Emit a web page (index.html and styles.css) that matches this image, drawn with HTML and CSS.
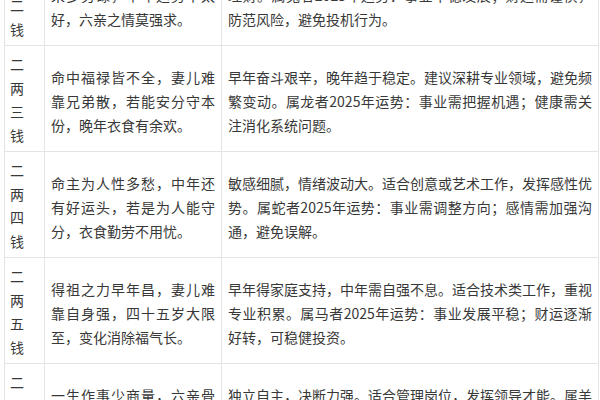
FILE: index.html
```html
<!DOCTYPE html>
<html lang="zh-CN">
<head>
<meta charset="utf-8">
<title>称骨算命</title>
<link rel="stylesheet" href="styles.css">
</head>
<body>
<div class="wrap">
<table class="bone">
  <colgroup>
    <col class="c-weight">
    <col class="c-verse">
    <col class="c-note">
  </colgroup>
  <tbody>
    <tr>
      <td class="weight">二两二钱</td>
      <td class="verse">身寒骨冷苦伶仃，此命推来多劳碌，早年运势不太好，六亲之情莫强求。</td>
      <td class="note">早年运势多坎坷，需靠自身努力奋斗。适合稳定工作，注意理财。属兔者2025年运势：事业平稳发展；财运需谨慎，防范风险，避免投机行为。</td>
    </tr>
    <tr>
      <td class="weight">二两三钱</td>
      <td class="verse">命中福禄皆不全，妻儿难靠兄弟散，若能安分守本份，晚年衣食有余欢。</td>
      <td class="note">早年奋斗艰辛，晚年趋于稳定。建议深耕专业领域，避免频繁变动。属龙者2025年运势：事业需把握机遇；健康需关注消化系统问题。</td>
    </tr>
    <tr>
      <td class="weight">二两四钱</td>
      <td class="verse">命主为人性多愁，中年还有好运头，若是为人能守分，衣食勤劳不用忧。</td>
      <td class="note">敏感细腻，情绪波动大。适合创意或艺术工作，发挥感性优势。属蛇者2025年运势：事业需调整方向；感情需加强沟通，避免误解。</td>
    </tr>
    <tr>
      <td class="weight">二两五钱</td>
      <td class="verse">得祖之力早年昌，妻儿难靠自身强，四十五岁大限至，变化消除福气长。</td>
      <td class="note">早年得家庭支持，中年需自强不息。适合技术类工作，重视专业积累。属马者2025年运势：事业发展平稳；财运逐渐好转，可稳健投资。</td>
    </tr>
    <tr>
      <td class="weight">二两六钱</td>
      <td class="verse">一生作事少商量，六亲骨肉不相帮，中年以后渐亨通，晚景安康福寿长。</td>
      <td class="note">独立自主，决断力强。适合管理岗位，发挥领导才能。属羊者2025年运势：事业稳中有进，贵人运较旺；人际关系需多加维护，注意劳逸结合。</td>
    </tr>
  </tbody>
</table>
</div>
</body>
</html>
```

FILE: styles.css
```css
html, body {
  margin: 0;
  padding: 0;
  background: #ffffff;
}

body {
  font-family: "Noto Sans CJK SC", "Noto Sans", sans-serif;
  font-size: 14px;
  color: #383838;
  overflow: hidden;
  height: 400px;
}

.wrap {
  padding-left: 4px;
}

.bone {
  margin-top: -61px;
  width: 594px;
  table-layout: fixed;
  border-collapse: collapse;
  border: 1px solid #e4e4e4;
}

.c-weight { width: 40px; }
.c-verse { width: 177px; }
.c-note { width: 377px; }

.bone td {
  border: 1px solid #e4e4e4;
  vertical-align: middle;
  line-height: 24px;
  padding: 8px 6px 3px 6px;
  text-align: justify;
}

.bone td.weight {
  padding: 7px 18px 4px 5px;
  line-height: 23.5px;
  text-align: left;
  word-break: break-all;
}
```
